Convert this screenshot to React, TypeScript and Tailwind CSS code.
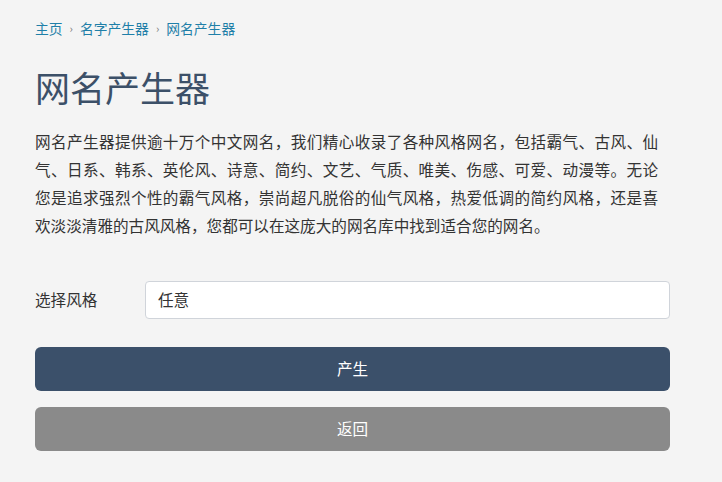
import React from "react";

const lines = [
  "网名产生器提供逾十万个中文网名，我们精心收录了各种风格网名，包括霸气、古风、仙",
  "气、日系、韩系、英伦风、诗意、简约、文艺、气质、唯美、伤感、可爱、动漫等。无论",
  "您是追求强烈个性的霸气风格，崇尚超凡脱俗的仙气风格，热爱低调的简约风格，还是喜",
];

export default function App() {
  return (
    <div
      className="min-h-[482px] w-full bg-[#f4f4f4]"
      style={{ fontFamily: '"Noto Sans CJK SC", "Noto Sans", sans-serif' }}
    >
      <div className="w-[635px] ml-[35px] pt-[18px] pb-[30px]">
        <nav className="flex items-center text-[13.8px] leading-[20px] text-[#1f7fa8]">
          <span>主页</span>
          <span className="mx-[7px] text-[11px] text-[#777]">›</span>
          <span>名字产生器</span>
          <span className="mx-[7px] text-[11px] text-[#777]">›</span>
          <span>网名产生器</span>
        </nav>
        <h1 className="mt-[27px] text-[35px] leading-[44px] text-[#3c5068] font-normal">
          网名产生器
        </h1>
        <div className="mt-[18px] text-[15.6px] leading-[28px] text-[#333]">
          {lines.map((l) => (
            <p
              key={l}
              className="w-[623px] whitespace-nowrap text-justify [text-align-last:justify]"
            >
              {l}
            </p>
          ))}
          <p className="whitespace-nowrap">
            欢淡淡清雅的古风风格，您都可以在这庞大的网名库中找到适合您的网名。
          </p>
        </div>
        <div className="mt-[42px] flex items-center">
          <label className="w-[110px] text-[15.6px] text-[#333]">选择风格</label>
          <div className="flex h-[38px] flex-1 items-center rounded-[4px] border border-[#d0d4da] bg-white px-[12px] text-[15.6px] text-[#333]">
            任意
          </div>
        </div>
        <button className="mt-[28px] flex h-[44px] w-full items-center justify-center rounded-[6px] bg-[#3b506a] text-[15.6px] text-white">
          产生
        </button>
        <button className="mt-[16px] flex h-[44px] w-full items-center justify-center rounded-[6px] bg-[#8a8a8a] text-[15.6px] text-white">
          返回
        </button>
      </div>
    </div>
  );
}
